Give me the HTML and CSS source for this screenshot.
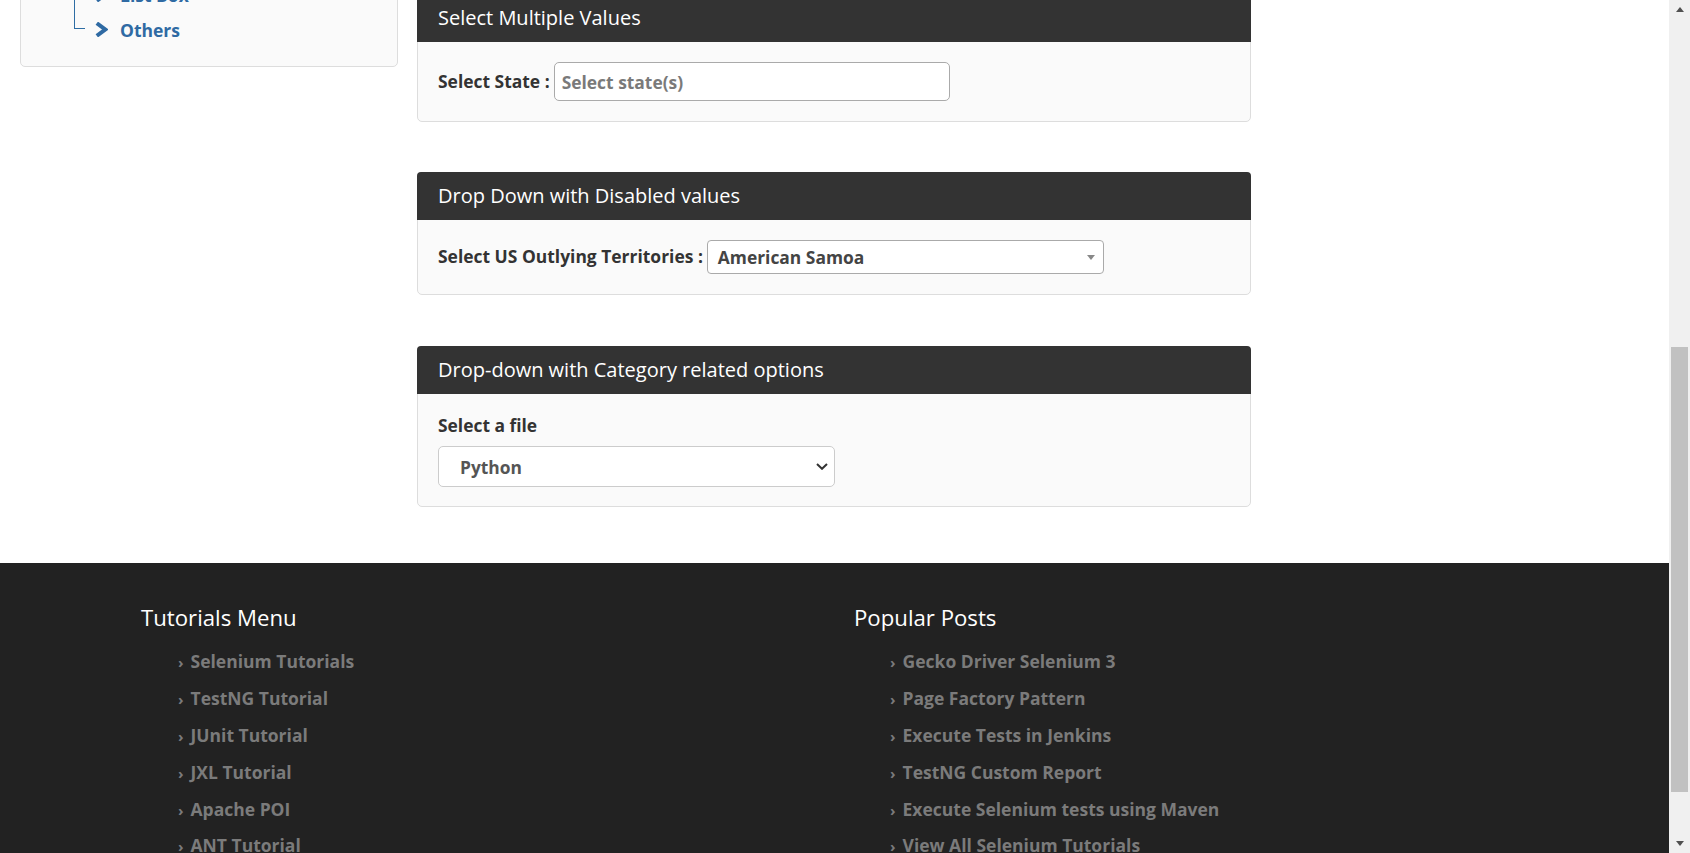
FILE: index.html
```html
<!DOCTYPE html>
<html lang="en">
<head>
<meta charset="utf-8">
<title>Select Dropdown Demo</title>
<link rel="stylesheet" href="styles.css">
</head>
<body>
<div class="window">
  <div class="viewport">
    <div class="content">
      <aside class="sidebar">
        <ul class="tree">
          <li class="tree-item">
            <svg class="chev" viewBox="0 0 13 15" aria-hidden="true"><polyline points="1.8,1.2 10.2,7.5 1.8,13.8" /></svg>
            <a class="tree-link">List Box</a>
          </li>
          <li class="tree-item">
            <svg class="chev" viewBox="0 0 13 15" aria-hidden="true"><polyline points="1.8,1.2 10.2,7.5 1.8,13.8" /></svg>
            <a class="tree-link">Others</a>
          </li>
        </ul>
      </aside>

      <main class="main">
        <section class="panel panel-first">
          <div class="panel-heading">Select Multiple Values</div>
          <div class="panel-body">
            <div class="form-inline">
              <span class="label">Select State :</span>
              <div class="multi">Select state(s)</div>
            </div>
          </div>
        </section>

        <section class="panel panel-second">
          <div class="panel-heading">Drop Down with Disabled values</div>
          <div class="panel-body">
            <div class="form-inline">
              <span class="label">Select US Outlying Territories :</span>
              <div class="single">
                <span>American Samoa</span>
                <span class="caret"></span>
              </div>
            </div>
          </div>
        </section>

        <section class="panel panel-third">
          <div class="panel-heading">Drop-down with Category related options</div>
          <div class="panel-body body-stack">
            <span class="field-label">Select a file</span>
            <div class="native">
              <span>Python</span>
              <svg class="down" viewBox="0 0 12 7" aria-hidden="true"><polyline points="1,1 6,5.8 11,1" /></svg>
            </div>
          </div>
        </section>
      </main>
    </div>

    <footer class="footer">
      <div class="footer-col">
        <h3 class="footer-title">Tutorials Menu</h3>
        <ul class="footer-list list-left">
          <li><span class="arrow">›</span>Selenium Tutorials</li>
          <li><span class="arrow">›</span>TestNG Tutorial</li>
          <li><span class="arrow">›</span>JUnit Tutorial</li>
          <li><span class="arrow">›</span>JXL Tutorial</li>
          <li><span class="arrow">›</span>Apache POI</li>
          <li><span class="arrow">›</span>ANT Tutorial</li>
        </ul>
      </div>
      <div class="footer-col">
        <h3 class="footer-title">Popular Posts</h3>
        <ul class="footer-list list-right">
          <li><span class="arrow">›</span>Gecko Driver Selenium 3</li>
          <li><span class="arrow">›</span>Page Factory Pattern</li>
          <li><span class="arrow">›</span>Execute Tests in Jenkins</li>
          <li><span class="arrow">›</span>TestNG Custom Report</li>
          <li><span class="arrow">›</span>Execute Selenium tests using Maven</li>
          <li><span class="arrow">›</span>View All Selenium Tutorials</li>
        </ul>
      </div>
    </footer>
  </div>

  <div class="scrollbar" aria-hidden="true">
    <div class="sb-btn sb-up"></div>
    <div class="sb-track"><div class="sb-thumb"></div></div>
    <div class="sb-btn sb-down"></div>
  </div>
</div>
</body>
</html>
```

FILE: styles.css
```css
html, body {
  margin: 0;
  padding: 0;
  height: 100%;
}

body {
  font-family: "Open Sans", "Liberation Sans", Arial, sans-serif;
  background: #ffffff;
  color: #333333;
  overflow: hidden;
}

.window {
  display: flex;
  width: 1690px;
  height: 853px;
}

.viewport {
  flex: 1;
  min-width: 0;
  display: flex;
  flex-direction: column;
  overflow: hidden;
}

/* ---------- upper content ---------- */
.content {
  flex: none;
  height: 563px;
  display: flex;
  align-items: flex-start;
  gap: 19px;
  padding-left: 20px;
  overflow: hidden;
  background: #ffffff;
}

.sidebar {
  flex: none;
  width: 378px;
  box-sizing: border-box;
  margin-top: -31px;
  padding: 8px 0 18px 53px;
  background: #fafafa;
  border: 1px solid #dddddd;
  border-radius: 5px;
}

.tree {
  list-style: none;
  margin: 0;
  padding: 0;
}

.tree-item {
  position: relative;
  height: 35px;
  display: flex;
  align-items: center;
  padding-left: 21px;
  font-size: 17.5px;
  font-weight: 700;
}

.tree-item::before {
  content: "";
  position: absolute;
  left: 0;
  top: -19px;
  width: 10px;
  height: 34px;
  border-left: 1px solid #2e6da4;
  border-bottom: 1px solid #2e6da4;
}

.chev {
  flex: none;
  width: 13px;
  height: 15px;
  margin-right: 12px;
  margin-top: -2px;
}

.chev polyline {
  fill: none;
  stroke: #2f6aa3;
  stroke-width: 4;
  stroke-linecap: butt;
  stroke-linejoin: miter;
}

.tree-link {
  color: #2f6aa3;
  text-decoration: none;
  margin-top: -1px;
}

/* ---------- panels ---------- */
.main {
  flex: none;
  width: 834px;
  margin-top: -6px;
}

.panel {
  background: #fafafa;
  border: 1px solid #dddddd;
  border-radius: 5px;
}

.panel-second {
  margin-top: 50px;
}

.panel-third {
  margin-top: 51px;
}

.panel-heading {
  margin: -1px -1px 0;
  padding: 10px 21px;
  background: #333333;
  color: #ffffff;
  border-radius: 4px 4px 0 0;
  font-size: 20px;
  line-height: 28px;
}

.panel-body {
  padding: 20px;
}

.body-stack {
  padding: 19px 20px;
}

.form-inline {
  display: flex;
  align-items: center;
  gap: 4px;
}

.label {
  font-size: 17.45px;
  font-weight: 700;
  color: #333333;
  white-space: nowrap;
  margin-top: -2px;
}

.multi {
  width: 396px;
  height: 39px;
  box-sizing: border-box;
  padding: 0 7px;
  display: flex;
  align-items: center;
  background: #ffffff;
  border: 1px solid #aaaaaa;
  border-radius: 5px;
  font-size: 17.4px;
  font-weight: 700;
  color: #7a7a7a;
}

.single {
  width: 397px;
  height: 34px;
  box-sizing: border-box;
  padding: 0 8px 0 10px;
  display: flex;
  align-items: center;
  justify-content: space-between;
  background: #ffffff;
  border: 1px solid #aaaaaa;
  border-radius: 4px;
  font-size: 17.4px;
  font-weight: 700;
  color: #444444;
}

.caret {
  width: 0;
  height: 0;
  border-left: 4.5px solid transparent;
  border-right: 4.5px solid transparent;
  border-top: 5px solid #888888;
}

.field-label {
  display: block;
  font-size: 17.4px;
  font-weight: 700;
  line-height: 25px;
  margin-bottom: 8px;
  color: #333333;
}

.native {
  width: 397px;
  height: 41px;
  box-sizing: border-box;
  padding: 0 5px 0 21px;
  display: flex;
  align-items: center;
  justify-content: space-between;
  background: #ffffff;
  border: 1px solid #cccccc;
  border-radius: 5px;
  font-size: 17.4px;
  font-weight: 700;
  color: #555555;
}

.down {
  width: 12px;
  height: 7px;
  margin-right: 1px;
}

.down polyline {
  fill: none;
  stroke: #333333;
  stroke-width: 2;
}

/* ---------- footer ---------- */
.footer {
  flex: none;
  height: 290px;
  box-sizing: border-box;
  background: #222222;
  padding: 42px 0 0 141px;
  display: grid;
  grid-template-columns: 713px 1fr;
  align-content: start;
}

.footer-title {
  margin: 0;
  font-size: 22.2px;
  font-weight: 400;
  line-height: 25px;
  color: #ffffff;
}

.footer-list {
  list-style: none;
  margin: 13px 0 0;
  padding: 0 0 0 37px;
}

.list-right {
  padding-left: 36px;
}

.footer-list li {
  font-size: 17.5px;
  font-weight: 700;
  line-height: 36.9px;
  height: 36.9px;
  color: #7b7b7b;
  white-space: nowrap;
}

.arrow {
  display: inline-block;
  margin-right: 7px;
  font-size: 15px;
  line-height: 1;
}

/* ---------- scrollbar ---------- */
.scrollbar {
  flex: none;
  width: 21px;
  height: 853px;
  background: #f0f0f0;
  display: flex;
  flex-direction: column;
}

.sb-btn {
  flex: none;
  height: 21px;
  display: flex;
  align-items: center;
  justify-content: center;
}

.sb-up::after {
  content: "";
  width: 0;
  height: 0;
  border-left: 4.5px solid transparent;
  border-right: 4.5px solid transparent;
  border-bottom: 5px solid #505050;
  margin-top: -2px;
}

.sb-down::after {
  content: "";
  width: 0;
  height: 0;
  border-left: 4.5px solid transparent;
  border-right: 4.5px solid transparent;
  border-top: 5px solid #505050;
  margin-bottom: -2px;
}

.sb-track {
  flex: 1;
  padding-top: 326px;
  box-sizing: border-box;
}

.sb-thumb {
  height: 445px;
  margin: 0 2px;
  background: #c1c1c1;
}
```
